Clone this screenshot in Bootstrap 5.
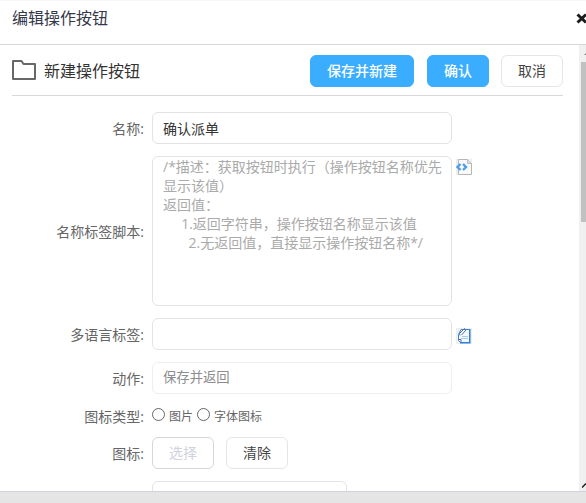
<!DOCTYPE html>
<html lang="zh-CN">
<head>
<meta charset="utf-8">
<meta name="viewport" content="width=device-width, initial-scale=1">
<title>编辑操作按钮</title>
<link href="https://cdn.jsdelivr.net/npm/bootstrap@5.3.0/dist/css/bootstrap.min.css" rel="stylesheet">
<style>
body{font-family:"Open Sans","Noto Sans CJK SC",sans-serif;font-size:14px;line-height:20px;color:#666;height:503px}
.dialog-head{height:45px;border-bottom:1px solid #d5d6e0;padding-left:12px;font-size:16px;color:#34384a;box-shadow:inset 0 1px 1px #f8f8f8}
.dialog-title{line-height:24px;margin-top:6px}
.close-x{position:absolute;left:576px;top:13px}
.dialog-main{height:446px}
.tool-row{height:51px;margin:0 16px 0 12px;padding-top:2px;border-bottom:1px solid #d8d8dc}
.folder{margin-bottom:2px}
.tool-title{font-size:16px;color:#333;margin-left:8px;padding-bottom:1px}
.btn-ui{height:32px;padding:0 16px;font-size:14px;line-height:20px;border-radius:6px;border:1px solid #e5e5e5;color:#444;background:#fff}
.btn-main{background:#3aadff;border-color:#3aadff;color:#fff;font-weight:500}
.btn-off{border-color:#d4d5df;color:#d0d2dc}
.gap-main{margin-left:13px}
.gap-plain{margin-left:12px}
.form-rows{padding-top:16px;gap:12px}
.field-label{width:144px;flex:none;text-align:right;margin-right:8px;padding-top:2px}
.field{width:300px;height:32px;flex:none;border-radius:6px;border:1px solid #e3e3e3;padding:0 10px;font-size:14px;line-height:20px;color:#333;box-shadow:none!important}
.field-area{height:150px;line-height:19px;padding:0 8px 0 10px;resize:none;overflow:hidden}
.field-area::placeholder{color:#aaa;opacity:1}
.field:disabled{background:#fff;color:#8c8c8c;border-color:#eee;padding-bottom:3px;font-size:13.33px}
.field-short{width:195px}
.side-icon{margin-left:4px;margin-top:3px;flex:none}
.radio-line{height:19px;font-size:12px}
.radio-line .field-label{font-size:14px}
.radio-dot{width:13px;height:13px;margin:0 4px 2px 0;border:1px solid #666;flex:none}
.radio-text{margin-right:4px;padding-top:3px}
.scroll-track{width:7px;background:#f0f0f0;flex:none}
.scroll-thumb{height:160px;background:#c1c1c1;margin-left:2px}
.grip{position:absolute;right:0;bottom:3px}
.dialog-foot{height:12px;background:#e5e5e5;border-top:1px solid #d2d3da}
</style>
</head>
<body class="overflow-hidden d-flex flex-column bg-white">
<header class="dialog-head d-flex align-items-start position-relative flex-shrink-0">
  <div class="dialog-title">编辑操作按钮</div>
  <svg class="close-x" width="12" height="11" viewBox="0 0 12 11"><path d="M1.500 1.500l8.500 8M10 1.500l-8.500 8" stroke="#1c1c1c" stroke-width="3"/></svg>
</header>
<main class="dialog-main d-flex overflow-hidden flex-shrink-0">
  <div class="flex-grow-1 overflow-hidden">
    <div class="tool-row d-flex align-items-center">
      <svg class="folder" width="24" height="20" viewBox="0 0 24 20" fill="none" stroke="#686868" stroke-width="2"><path d="M1 1h8.500l2 3H23v15H1z" stroke-linejoin="round"/></svg>
      <div class="tool-title me-auto">新建操作按钮</div>
      <button class="btn btn-ui btn-main">保存并新建</button>
      <button class="btn btn-ui btn-main gap-main">确认</button>
      <button class="btn btn-ui gap-plain">取消</button>
    </div>
    <form class="form-rows d-flex flex-column">
      <div class="d-flex align-items-center"><label class="field-label">名称:</label><input class="form-control field" value="确认派单"></div>
      <div class="d-flex align-items-center"><label class="field-label">名称标签脚本:</label><textarea class="form-control field field-area" placeholder="/*描述：获取按钮时执行（操作按钮名称优先显示该值）&#10;返回值：&#10;     1.返回字符串，操作按钮名称显示该值&#10;       2.无返回值，直接显示操作按钮名称*/"></textarea>
        <svg class="side-icon align-self-start" width="16" height="16" viewBox="0 0 16 16"><path d="M0 0h16v16H0z" fill="#eee"/><path d="M2.500 .5h9l4 4v11h-13z" fill="#fafafa" stroke="#b5b5b5"/><path d="M11.500 .5v4h4" fill="#e3e3e3" stroke="#bbb"/><path d="M4.500 5L1.500 8l3 3M7 5l3 3-3 3" fill="none" stroke="#4c9ee8" stroke-width="2.400"/></svg></div>
      <div class="d-flex align-items-center"><label class="field-label">多语言标签:</label><input class="form-control field">
        <svg class="side-icon" width="16" height="16" viewBox="0 0 16 16"><path d="M0 0h16v16H0z" fill="#efefef"/><path d="M5 1.500h8.500v13h-9l-2-2v-6z" fill="#f3f9ff" stroke="#3f83d2"/><path d="M13.800 1v13.800H4" fill="none" stroke="#2f7edb" stroke-width="1.400"/><path d="M6 8.500h6M5 10.500h7" stroke="#a9ccec"/><path d="M4 7.500l-.5-2L8.500 .5l1.500 1.500L5.500 7M2.500 11.500H5v3" fill="none" stroke="#50749c"/></svg></div>
      <div class="d-flex align-items-center"><label class="field-label">动作:</label><input class="form-control field" value="保存并返回" disabled></div>
      <div class="radio-line d-flex align-items-center"><label class="field-label">图标类型:</label><span class="radio-dot rounded-circle"></span><span class="radio-text">图片</span><span class="radio-dot rounded-circle"></span><span class="radio-text">字体图标</span></div>
      <div class="d-flex align-items-center"><label class="field-label">图标:</label><button type="button" class="btn btn-ui btn-off">选择</button><button type="button" class="btn btn-ui gap-plain">清除</button></div>
      <div class="d-flex"><span class="field-label"></span><input class="form-control field field-short"></div>
    </form>
  </div>
  <div class="scroll-track position-relative">
    <svg class="d-block" width="7" height="17"><path d="M5 10l4-4v4z" fill="#888"/></svg>
    <div class="scroll-thumb"></div>
    <svg class="grip" width="4" height="5"><path d="M0 4.500L4 .5" stroke="#222" stroke-width="1.500"/></svg>
  </div>
</main>
<footer class="dialog-foot flex-shrink-0"></footer>
<script src="https://cdn.jsdelivr.net/npm/bootstrap@5.3.0/dist/js/bootstrap.bundle.min.js"></script>
</body>
</html>
